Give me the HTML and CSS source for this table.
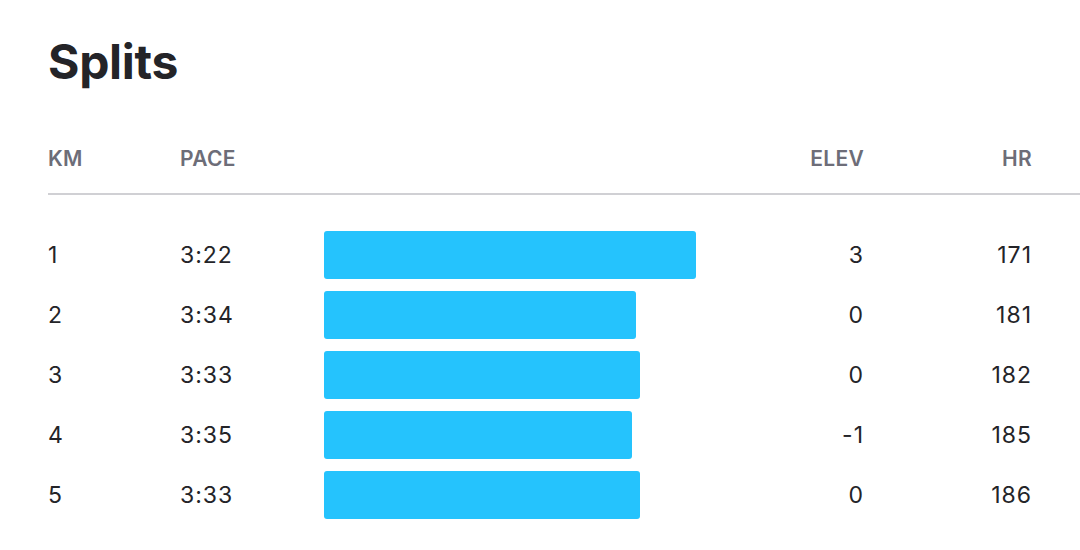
FILE: index.html
```html
<!DOCTYPE html>
<html>
<head>
<meta charset="utf-8">
<link rel="stylesheet" href="styles.css">
</head>
<body>
<section class="splits">
  <h2 class="title">Splits</h2>
  <div class="table">
    <div class="row head">
      <div class="c-km">KM</div>
      <div class="c-pace">PACE</div>
      <div class="c-bar"></div>
      <div class="c-elev">ELEV</div>
      <div class="c-hr">HR</div>
    </div>
    <div class="body">
      <div class="row">
        <div class="c-km">1</div>
        <div class="c-pace">3:22</div>
        <div class="c-bar"><div class="bar" style="width:372px"></div></div>
        <div class="c-elev">3</div>
        <div class="c-hr">171</div>
      </div>
      <div class="row">
        <div class="c-km">2</div>
        <div class="c-pace">3:34</div>
        <div class="c-bar"><div class="bar" style="width:312px"></div></div>
        <div class="c-elev">0</div>
        <div class="c-hr">181</div>
      </div>
      <div class="row">
        <div class="c-km">3</div>
        <div class="c-pace">3:33</div>
        <div class="c-bar"><div class="bar" style="width:316px"></div></div>
        <div class="c-elev">0</div>
        <div class="c-hr">182</div>
      </div>
      <div class="row">
        <div class="c-km">4</div>
        <div class="c-pace">3:35</div>
        <div class="c-bar"><div class="bar" style="width:308px"></div></div>
        <div class="c-elev">-1</div>
        <div class="c-hr">185</div>
      </div>
      <div class="row">
        <div class="c-km">5</div>
        <div class="c-pace">3:33</div>
        <div class="c-bar"><div class="bar" style="width:316px"></div></div>
        <div class="c-elev">0</div>
        <div class="c-hr">186</div>
      </div>
    </div>
  </div>
</section>
</body>
</html>
```

FILE: styles.css
```css
html, body {
  margin: 0;
  padding: 0;
  background: #ffffff;
}
body {
  font-family: Inter, "Noto Sans", sans-serif;
  color: #242428;
  width: 1080px;
  height: 550px;
  overflow: hidden;
}
.splits {
  padding: 30px 0 0 48px;
}
.title {
  margin: 0;
  font-size: 48px;
  font-weight: 700;
  line-height: 64px;
  letter-spacing: -0.3px;
}
.table {
  margin-top: 46px;
}
.row {
  display: grid;
  grid-template-columns: 132px 144px 1fr 83px 168px;
  padding-right: 49px;
  align-items: center;
}
.head {
  height: 36px;
  padding-bottom: 17px;
  border-bottom: 2px solid #d0d0d4;
  font-size: 21px;
  font-weight: 600;
  letter-spacing: 0.3px;
  color: #6d6d78;
}
.body {
  padding-top: 36px;
  display: flex;
  flex-direction: column;
  gap: 12px;
}
.body .row {
  height: 48px;
  font-size: 23px;
  font-weight: 400;
  letter-spacing: 1px;
}
.c-elev, .c-hr {
  text-align: right;
}
.c-elev {
  margin-right: -1px;
}
.c-hr {
  margin-right: -1px;
}
.c-bar {
  height: 100%;
  display: flex;
  align-items: stretch;
}
.bar {
  background: #25c3fd;
  border-radius: 3px;
}
```
